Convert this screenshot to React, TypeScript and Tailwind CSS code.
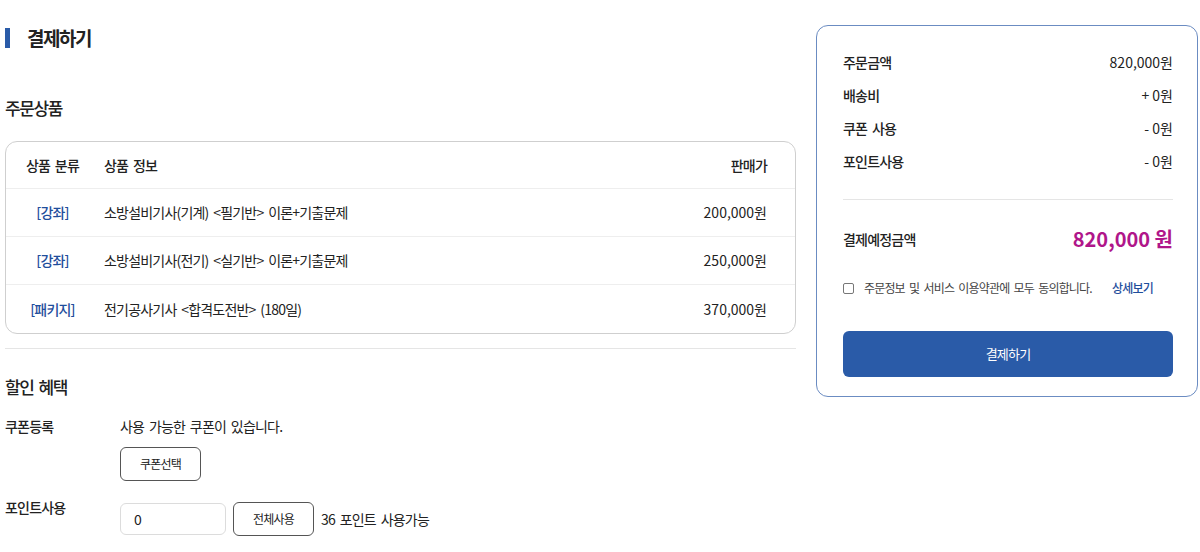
import React from "react";

const font = { fontFamily: '"Noto Sans CJK KR", "Noto Sans", sans-serif' };

const items = [
  { type: "[강좌]", name: "소방설비기사(기계) <필기반> 이론+기출문제", price: "200,000원" },
  { type: "[강좌]", name: "소방설비기사(전기) <실기반> 이론+기출문제", price: "250,000원" },
  { type: "[패키지]", name: "전기공사기사 <합격도전반> (180일)", price: "370,000원" },
];

const summary = [
  { label: "주문금액", value: "820,000원" },
  { label: "배송비", value: "+ 0원" },
  { label: "쿠폰 사용", value: "- 0원" },
  { label: "포인트사용", value: "- 0원" },
];

export default function App() {
  return (
    <div
      className="w-[1200px] h-[552px] overflow-hidden bg-white text-[#222] flex tracking-[-0.05em] [word-spacing:0.15em]"
      style={font}
    >
      {/* Left column */}
      <div className="w-[796px] pl-[5px] pt-[24px] shrink-0">
        {/* Title */}
        <div className="flex items-center h-[28px]">
          <div className="w-[5px] h-[20px] bg-[#2a5ba8]"></div>
          <h1 className="ml-[17px] text-[19px] leading-[28px] font-semibold tracking-[-0.08em]">결제하기</h1>
        </div>

        {/* 주문상품 */}
        <h2 className="mt-[43px] text-[17px] leading-[26px] font-medium tracking-[-0.08em]">주문상품</h2>

        <div className="mt-[20px] border border-[#cfcfcf] rounded-[12px] text-[14px]">
          <div className="flex items-center h-[47px] font-medium border-b border-[#eeeeee]">
            <div className="w-[93px] text-center">상품 분류</div>
            <div className="ml-[5px] flex-1">상품 정보</div>
            <div className="pr-[28px]">판매가</div>
          </div>
          {items.map((it, i) => (
            <div
              key={i}
              className={
                "flex items-center h-[48px] " +
                (i < items.length - 1 ? "border-b border-[#eeeeee]" : "")
              }
            >
              <div className="w-[93px] text-center text-[#1f4e9c] font-medium">{it.type}</div>
              <div className="ml-[5px] flex-1">{it.name}</div>
              <div className="pr-[28px] tracking-normal">{it.price}</div>
            </div>
          ))}
        </div>

        <div className="mt-[14px] h-px bg-[#e5e5e5]"></div>

        {/* 할인 혜택 */}
        <h2 className="mt-[25px] text-[17px] leading-[26px] font-medium tracking-[-0.08em]">할인 혜택</h2>

        <div className="mt-[16px] flex text-[14px]">
          <div className="w-[115px] leading-[20px] font-medium">쿠폰등록</div>
          <div className="flex flex-col items-start">
            <p className="leading-[20px]">사용 가능한 쿠폰이 있습니다.</p>
            <button className="mt-[11px] w-[81px] h-[34px] border border-[#555] rounded-[6px] text-[12px]">
              쿠폰선택
            </button>
          </div>
        </div>

        <div className="mt-[21px] flex text-[14px]">
          <div className="w-[115px] leading-[20px] -mt-[5px] font-medium">포인트사용</div>
          <div className="flex items-center">
            <input
              className="w-[106px] h-[32px] border border-[#dcdcdc] rounded-[6px] px-[13px] text-[14px] outline-none"
              defaultValue="0"
              style={font}
            />
            <button className="ml-[7px] w-[81px] h-[34px] border border-[#555] rounded-[6px] text-[12px]">
              전체사용
            </button>
            <span className="ml-[7px]">36 포인트 사용가능</span>
          </div>
        </div>
      </div>

      {/* Right panel */}
      <div className="ml-[20px] mt-[25px] w-[382px] h-[372px] border border-[#6b8cc2] rounded-[12px] pl-[26px] pr-[24px] pt-[20px] shrink-0">
        {summary.map((s) => (
          <div key={s.label} className="flex justify-between items-center h-[33px] text-[14px]">
            <span className="font-medium">{s.label}</span>
            <span className="tracking-normal [word-spacing:normal]">{s.value}</span>
          </div>
        ))}

        <div className="mt-[21px] h-px bg-[#e5e5e5]"></div>

        <div className="mt-[19px] flex justify-between items-center h-[40px]">
          <span className="text-[14px] font-medium">결제예정금액</span>
          <span className="text-[20px] font-bold text-[#b0168a] tracking-normal [word-spacing:normal]">820,000 원</span>
        </div>

        <div className="mt-[19px] flex items-center h-[20px] text-[12px] whitespace-nowrap">
          <span className="w-[11px] h-[11px] border border-[#777] rounded-[2px] shrink-0"></span>
          <span className="ml-[10px] text-[#444] tracking-[-0.07em]">주문정보 및 서비스 이용약관에 모두 동의합니다.</span>
          <span className="ml-auto mr-[20px] text-[12px] text-[#1f4e9c] font-medium">상세보기</span>
        </div>

        <button className="mt-[33px] w-[330px] h-[46px] bg-[#2a5ba8] rounded-[6px] text-white text-[13px]">
          결제하기
        </button>
      </div>
    </div>
  );
}
